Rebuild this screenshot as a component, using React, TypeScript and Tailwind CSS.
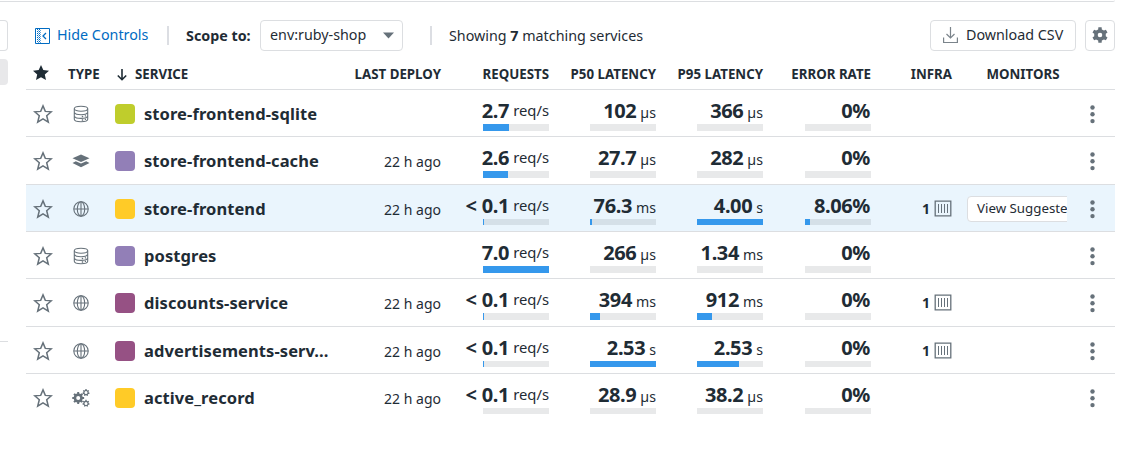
import React from 'react';

type Metric = { prefix?: string; value: string; unit?: string; fill: number };
type Kind = 'db' | 'cache' | 'web' | 'custom';
type Service = {
  name: string;
  kind: Kind;
  color: string;
  deploy?: string;
  rowClass: string;
  barClass: string;
  metrics: Metric[];
  infra?: number;
  monitors?: string;
};

const services: Service[] = [
  {
    name: 'store-frontend-sqlite', kind: 'db', color: 'bg-[#bfcd2c]', rowClass: 'h-[47px] border-b', barClass: 'h-[7px]',
    metrics: [{ value: '2.7', unit: 'req/s', fill: 39 }, { value: '102', unit: 'µs', fill: 0 }, { value: '366', unit: 'µs', fill: 0 }, { value: '0%', fill: 0 }],
  },
  {
    name: 'store-frontend-cache', kind: 'cache', color: 'bg-[#927fb7]', deploy: '22 h ago', rowClass: 'h-[48px] border-b', barClass: 'h-[7px]',
    metrics: [{ value: '2.6', unit: 'req/s', fill: 38 }, { value: '27.7', unit: 'µs', fill: 0 }, { value: '282', unit: 'µs', fill: 0 }, { value: '0%', fill: 0 }],
  },
  {
    name: 'store-frontend', kind: 'web', color: 'bg-[#ffcb27]', deploy: '22 h ago', rowClass: 'h-[47px] border-b bg-[#eaf5fd]', barClass: 'h-[6px]',
    metrics: [{ prefix: '<', value: '0.1', unit: 'req/s', fill: 1 }, { value: '76.3', unit: 'ms', fill: 3 }, { value: '4.00', unit: 's', fill: 100 }, { value: '8.06%', fill: 8 }],
    infra: 1, monitors: 'View Suggested',
  },
  {
    name: 'postgres', kind: 'db', color: 'bg-[#927fb7]', rowClass: 'h-[47px] border-b', barClass: 'h-[7px]',
    metrics: [{ value: '7.0', unit: 'req/s', fill: 100 }, { value: '266', unit: 'µs', fill: 0 }, { value: '1.34', unit: 'ms', fill: 0 }, { value: '0%', fill: 0 }],
  },
  {
    name: 'discounts-service', kind: 'web', color: 'bg-[#965184]', deploy: '22 h ago', rowClass: 'h-[48px] border-b', barClass: 'h-[7px]',
    metrics: [{ prefix: '<', value: '0.1', unit: 'req/s', fill: 0.2 }, { value: '394', unit: 'ms', fill: 15.6 }, { value: '912', unit: 'ms', fill: 22.8 }, { value: '0%', fill: 0 }],
    infra: 1,
  },
  {
    name: 'advertisements-serv...', kind: 'web', color: 'bg-[#965184]', deploy: '22 h ago', rowClass: 'h-[47px] border-b', barClass: 'h-[6px]',
    metrics: [{ prefix: '<', value: '0.1', unit: 'req/s', fill: 0.6 }, { value: '2.53', unit: 's', fill: 100 }, { value: '2.53', unit: 's', fill: 63.3 }, { value: '0%', fill: 0 }],
    infra: 1,
  },
  {
    name: 'active_record', kind: 'custom', color: 'bg-[#ffcb27]', deploy: '22 h ago', rowClass: 'h-[47px]', barClass: 'h-[6px]',
    metrics: [{ prefix: '<', value: '0.1', unit: 'req/s', fill: 0 }, { value: '28.9', unit: 'µs', fill: 0 }, { value: '38.2', unit: 'µs', fill: 0 }, { value: '0%', fill: 0 }],
  },
];

function StarOutline() {
  return (
    <svg width="20" height="20" viewBox="0 0 20 20" fill="none" stroke="#66717a" strokeWidth="1.5" strokeLinejoin="miter">
      <path d="M10 1.900 12.300 7.400 18.300 7.800 13.700 11.700 15.300 18.200 10 14.900 4.700 18.200 6.300 11.700 1.700 7.800 7.700 7.400Z" />
    </svg>
  );
}

function StarSolid() {
  return (
    <svg width="16" height="16" viewBox="0 0 16 16" fill="#1f2c35">
      <path d="M8 0 10.300 5.100 16 5.700 11.800 9.400 13 15 8 12.200 3 15 4.200 9.400 0 5.700 5.700 5.100Z" />
    </svg>
  );
}

const gearPath = (cx: number, cy: number, teeth: number, outer: number, inner: number) => {
  const points: string[] = [];
  const step = (Math.PI * 2) / teeth;
  for (let i = 0; i < teeth; i++) {
    const a = i * step - Math.PI / 2;
    [[-0.3, inner], [-0.2, outer], [0.2, outer], [0.3, inner]].forEach(([o, r]) => {
      points.push(`${(cx + Math.cos(a + o * step) * r).toFixed(2)} ${(cy + Math.sin(a + o * step) * r).toFixed(2)}`);
    });
  }
  return `M${points.join('L')}Z`;
};

const hole = (cx: number, cy: number, r: number) => `M${cx - r} ${cy}a${r} ${r} 0 1 0 ${2 * r} 0a${r} ${r} 0 1 0 ${-2 * r} 0Z`;

function KindIcon({ kind }: { kind: Kind }) {
  if (kind === 'db') {
    return (
      <svg width="18" height="18" viewBox="0 0 18 18" fill="none" stroke="#68737b" strokeWidth="1.1">
        <ellipse cx="9" cy="3.8" rx="6.7" ry="2.5" />
        <path d="M2.300 3.800V14.200C2.300 15.700 5.300 16.700 9 16.700s6.700-1 6.700-2.500V3.800M2.300 7.500C3 8.900 5.600 9.700 9 9.700s6-.8 6.700-2.200M2.300 11.200c.7 1.400 3.300 2.200 6.700 2.200s6-.8 6.700-2.200" />
        <path d="M9.800 11.500h1.400M12.800 10.800h1.200M9.800 15h1.400M12.800 14.300h1.200" strokeWidth="1.3" />
      </svg>
    );
  }
  if (kind === 'cache') {
    return (
      <svg width="18" height="18" viewBox="0 0 18 18" fill="#66717a">
        <path d="M9 2.500 17.500 6.200 9 10 .500 6.200Z" />
        <path d="M.500 11 3.800 9.300 9 11.600l5.200-2.300 3.300 1.700L9 15.300Z" />
      </svg>
    );
  }
  if (kind === 'web') {
    return (
      <svg width="18" height="18" viewBox="0 0 18 18" fill="none" stroke="#66717a" strokeWidth="1.1">
        <circle cx="9" cy="9" r="7.2" />
        <ellipse cx="9" cy="9" rx="3.7" ry="7.2" />
        <path d="M1.800 9H16.200M9 1.800V16.200" />
      </svg>
    );
  }
  return (
    <svg width="18" height="18" viewBox="0 0 18 18" fill="#66717a" fillRule="evenodd">
      <path d={gearPath(6.2, 9, 8, 6, 4.6) + hole(6.2, 9, 2)} />
      <path d={gearPath(14, 3.6, 7, 3.6, 2.7) + hole(14, 3.6, 1.5)} />
      <path d={gearPath(14, 14.4, 7, 3.6, 2.7) + hole(14, 14.4, 1.5)} />
    </svg>
  );
}

function MetricCell({ metric, width, bar }: { metric: Metric; width: string; bar: string }) {
  const perSecond = metric.unit === 'req/s';
  return (
    <div className={`${width} flex shrink-0 flex-col items-end pt-[8px]`}>
      <div className="flex h-[26px] items-baseline whitespace-nowrap leading-[25px]">
        {metric.prefix && <span className="mr-[5px] text-[20px] font-bold">{metric.prefix}</span>}
        <span className={metric.unit ? 'text-[20px] font-bold tracking-[-0.4px]' : 'mr-px text-[20px] font-bold tracking-[-0.4px]'}>{metric.value}</span>
        {metric.unit && (
          <span className={perSecond ? 'relative -top-[2px] ml-[4px] text-[14.8px]' : 'ml-[4px] text-[14.2px]'}>{metric.unit}</span>
        )}
      </div>
      <div className={`${bar} w-[66px] bg-[#1f2c35]/10`}>
        <div className="h-full bg-[#3598ec]" style={{ width: `${metric.fill}%` }} />
      </div>
    </div>
  );
}

function ServiceRow({ service }: { service: Service }) {
  const widths = ['w-[108px]', 'w-[107px]', 'w-[107px]', 'w-[108px]'];
  return (
    <div className={`${service.rowClass} border-[#dcdee1]`}>
      <div className="flex h-[46px]">
        <div className="flex w-[43px] items-center pl-[7px] pt-[2px]"><StarOutline /></div>
        <div className="flex w-[46px] items-center pl-[3px] pt-[2px]"><KindIcon kind={service.kind} /></div>
        <div className="flex w-[226px] items-center pt-[2px]">
          <span className={`${service.color} size-5 shrink-0 rounded-[4px]`} />
          <span className="ml-[9px] whitespace-nowrap text-[16.5px] font-bold tracking-[0.08px]">{service.name}</span>
        </div>
        <div className="flex w-[100px] items-center justify-end pt-[2px] text-[14px]">{service.deploy}</div>
        {service.metrics.map((m, i) => <MetricCell key={i} metric={m} width={widths[i]} bar={service.barClass} />)}
        <div className="flex w-[81px] items-center justify-end gap-[4px] pt-px">
          {service.infra && (
            <>
              <span className="text-[14px] font-bold">{service.infra}</span>
              <svg width="18" height="17" viewBox="0 0 18 17" fill="none" stroke="#66717a">
                <path d="M1.200 1.200h15.600v14.600H1.200Z" strokeWidth="1.3" />
                <path d="M4.500 4v9M7.500 4v9M10.500 4v9M13.500 4v9" />
              </svg>
            </>
          )}
        </div>
        <div className="flex w-[115px] items-center overflow-hidden pl-[15px] pt-px">
          {service.monitors && (
            <div className="flex h-[26px] w-[130px] shrink-0 items-center whitespace-nowrap rounded-[4px] border border-[#dcdee1] bg-white pl-[9px] text-[13.3px]">
              {service.monitors}
            </div>
          )}
        </div>
        <div className="flex w-[48px] items-center pl-[23px] pt-[2px]">
          <svg width="5" height="19" viewBox="0 0 5 19" fill="#66717a">
            <circle cx="2.5" cy="2.5" r="2.2" /><circle cx="2.5" cy="9.3" r="2.2" /><circle cx="2.5" cy="16.1" r="2.2" />
          </svg>
        </div>
      </div>
    </div>
  );
}

export default function App() {
  return (
    <div className="flex h-[449px] w-[1130px] overflow-hidden bg-white font-['Noto_Sans',sans-serif] text-[#1f2c35]">
      <div className="flex w-[8px] shrink-0 flex-col">
        <div className="h-[2px] border-b border-[#dcdee1]" />
        <div className="mt-[18px] h-[31px] rounded-r-[4px] border border-l-0 border-[#dcdee1]" />
        <div className="mt-[8px] h-[26px] rounded-r-[4px] bg-[#e8e8ea]" />
        <div className="mt-[256px] h-px bg-[#dcdee1]" />
      </div>
      <div className="w-[1107px]">
        <div className="h-[2px] rounded-br-[4px] border-b border-[#dcdee1]" />
        <div className="pl-[18px]">
          <div className="mt-[18px] flex h-[31px] items-center text-[14.3px]">
            <div className="flex items-center pl-[9px] text-[#006bc2]">
              <svg width="15" height="16" viewBox="0 0 15 16" fill="none" stroke="#006bc2">
                <path d="M.5.5h14v15H.5Z" />
                <path d="M2.500 1v14M4.500 1v14" strokeDasharray="1 1" />
                <path d="M3.500 2v13M5.500 2v13" strokeDasharray="1 1" opacity=".6" />
                <path d="M11 5 8 8l3 3" strokeWidth="1.3" />
              </svg>
              <span className="ml-[7px] w-[92px] whitespace-nowrap pb-[2px]">Hide Controls</span>
            </div>
            <div className="ml-[18px] h-[19px] w-[2px] bg-[#dcdee3]" />
            <span className="ml-[17px] w-[66px] whitespace-nowrap text-[14.3px] font-bold">Scope to:</span>
            <div className="ml-[8px] flex h-[31px] w-[143px] items-center justify-between rounded-[4px] border border-[#dcdee1] pl-[9px] pr-[8px]">
              <span className="pb-[2px]">env:ruby-shop</span>
              <svg width="11" height="7" viewBox="0 0 11 7" fill="#66717a"><path d="M0 .500h11L5.500 6.500Z" /></svg>
            </div>
            <div className="ml-[27px] h-[19px] w-[2px] bg-[#dcdee3]" />
            <span className="ml-[17px] whitespace-nowrap">Showing <b className="font-bold">7</b> matching services</span>
            <div className="ml-auto flex h-[31px] w-[146px] items-center rounded-[4px] border border-[#dcdee1] pl-[12px]">
              <svg width="15" height="17" viewBox="0 0 15 17" fill="none" stroke="#7b848b" strokeWidth="1.2">
                <path d="M.600 10.500v5h13.800v-5M7.500 0v11M3.500 7l4 4 4-4" />
              </svg>
              <span className="ml-[8px] whitespace-nowrap pb-[2px]">Download CSV</span>
            </div>
            <div className="ml-[9px] flex h-[31px] w-[30px] items-center justify-center rounded-[4px] border border-[#dcdee1] pb-px">
              <svg width="16" height="16" viewBox="0 0 16 16" fill="#66717a" fillRule="evenodd">
                <path d={gearPath(8, 8, 6, 7.9, 5.9) + hole(8, 8, 2.3)} />
              </svg>
            </div>
          </div>
          <div className="flex h-[39px] items-center whitespace-nowrap border-b border-[#dcdee1] pt-[9px] text-[13.3px] font-bold">
            <div className="w-[42px] pb-[4px] pl-[7px]"><StarSolid /></div>
            <div className="w-[46px]">TYPE</div>
            <div className="flex w-[227px] items-center pl-[3px]">
              <svg width="10" height="12" viewBox="0 0 10 12" fill="none" stroke="#1f2c35" strokeWidth="1.6"><path d="M5 0v10.500M.800 6.500 5 10.700 9.200 6.500" /></svg>
              <span className="ml-[8px]">SERVICE</span>
            </div>
            <div className="w-[100px] text-right">LAST DEPLOY</div>
            <div className="w-[108px] text-right">REQUESTS</div>
            <div className="w-[107px] text-right">P50 LATENCY</div>
            <div className="w-[107px] text-right">P95 LATENCY</div>
            <div className="w-[108px] text-right">ERROR RATE</div>
            <div className="w-[81px] text-right">INFRA</div>
            <div className="w-[107.5px] text-right">MONITORS</div>
          </div>
          {services.map((s) => <ServiceRow key={s.name} service={s} />)}
        </div>
      </div>
    </div>
  );
}
